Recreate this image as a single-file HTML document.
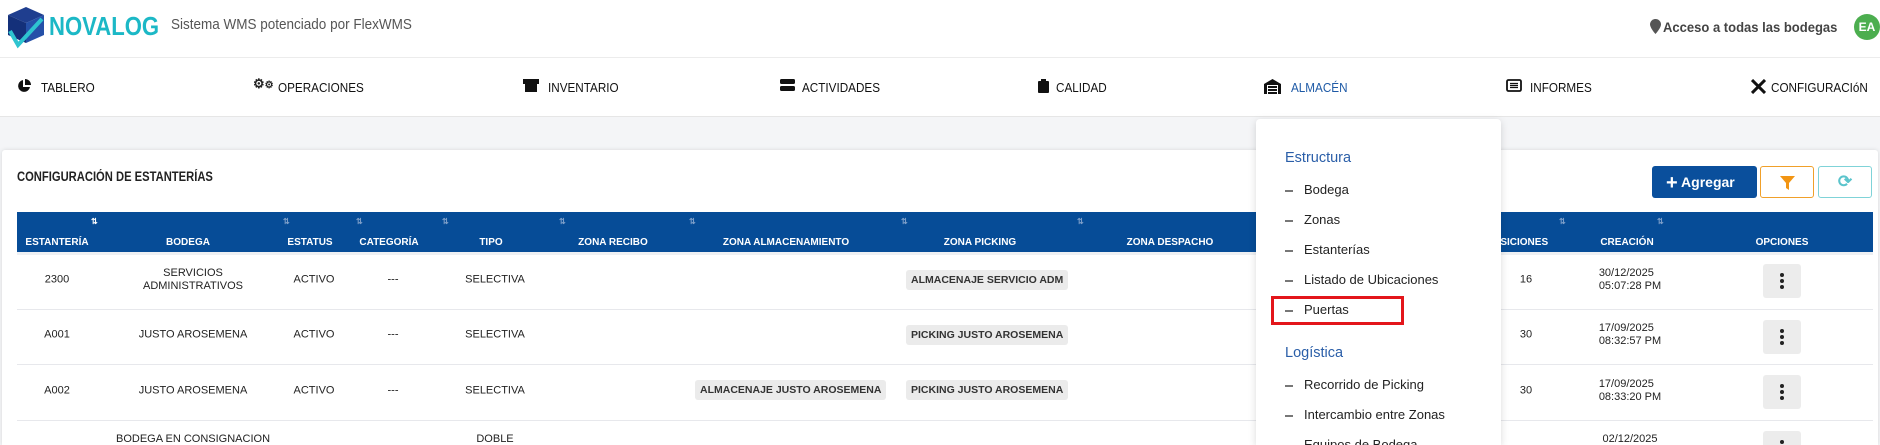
<!DOCTYPE html>
<html style="height:445px;overflow:hidden"><head><meta charset="utf-8"><style>
*{box-sizing:border-box;margin:0;padding:0}
html,body{width:1880px;height:445px;overflow:hidden}
body{background:#f4f5f7;font-family:"Liberation Sans",sans-serif;color:#222}
#w{position:relative;width:1880px;height:445px;overflow:hidden}
.abs{position:absolute}
.hdr{left:0;top:0;width:1880px;height:58px;background:#fff;border-bottom:1px solid #ececec}
.nav{left:0;top:58px;width:1880px;height:59px;background:#fff;border-bottom:1px solid #e6e6e6}
.ni{position:absolute;top:22px;font-size:13px;color:#111;white-space:nowrap;transform:scaleX(.9);transform-origin:left}
.ic{position:absolute;top:21px}
.card{left:2px;top:150px;width:1876px;height:295px;background:#fff;box-shadow:0 0 4px rgba(0,0,0,.12);border-radius:3px 3px 0 0}
.th{left:17px;top:212px;width:1856px;height:40px;background:#064c97}
.hc{position:absolute;top:25px;color:#fff;font-size:10px;font-weight:bold;transform:translateX(-50%);white-space:nowrap}
.so{position:absolute;top:5px;color:#7e9fc9;font-size:8px;font-weight:bold}
.cell{position:absolute;font-size:11px;color:#222;transform:translate(-50%,-50%);text-align:center;line-height:13px;white-space:nowrap}
.line{position:absolute;left:17px;width:1856px;height:1px;background:#e7e8ec}
.chip{position:absolute;height:20px;background:#ebebeb;border-radius:3px;font-size:10.5px;font-weight:bold;color:#333;padding:4px 5px;white-space:nowrap}
.opt{position:absolute;left:1763px;width:38px;height:34px;background:#ececec;border-radius:3px}
.opt i{position:absolute;left:17px;width:4px;height:4px;border-radius:2px;background:#222}
.dd{left:1256px;top:119px;width:245px;height:326px;background:#fff;border-radius:4px 4px 0 0;box-shadow:0 2px 8px rgba(0,0,0,.15);overflow:hidden}
.dh{position:absolute;left:29px;color:#2a5ea8;font-size:14.5px}
.di{position:absolute;left:48px;color:#222;font-size:13px;white-space:nowrap}
.dash{position:absolute;left:29px;width:8px;height:1.5px;background:#777}
</style></head><body><div id="w">
<div class="abs hdr">
 <svg class="abs" style="left:6px;top:5px" width="40" height="44" viewBox="0 0 40 44">
  <polygon points="2,10 20,2 38,10 20,18" fill="#1f3e8f"/>
  <polygon points="2,10 20,18 20,38 2,30" fill="#14307a"/>
  <polygon points="20,18 38,10 38,30 20,38" fill="#2550a8"/>
  <path d="M4,26 L12,40 L36,14" stroke="#2ec4d0" stroke-width="4" fill="none"/>
 </svg>
 <div class="abs" style="left:49px;top:11px;font-size:26px;font-weight:bold;color:#1cb8c6;transform:scaleX(.85);transform-origin:left">NOVALOG</div>
 <div class="abs" style="left:171px;top:16px;font-size:15px;color:#555;transform:scaleX(.9);transform-origin:left;white-space:nowrap">Sistema WMS potenciado por FlexWMS</div>
 <svg class="abs" style="left:1650px;top:19px" width="11" height="15" viewBox="0 0 11 15"><path d="M5.5 0C2.5 0 0 2.4 0 5.4 0 9 5.5 15 5.5 15S11 9 11 5.4C11 2.4 8.5 0 5.5 0z" fill="#555"/></svg>
 <div class="abs" style="left:1663px;top:19px;font-size:14px;font-weight:bold;color:#444;transform:scaleX(.93);transform-origin:left">Acceso a todas las bodegas</div>
 <div class="abs" style="left:1854px;top:14px;width:26px;height:26px;border-radius:13px;background:#4cae4f;color:#fff;font-size:12px;font-weight:bold;line-height:26px;text-align:center">EA</div>
</div>
<div class="abs nav">
 <svg class="ic" style="left:17px" width="14" height="14" viewBox="0 0 14 14"><path d="M6 1A6 6 0 1 0 13 8H6z" fill="#111"/><path d="M8 0v6h6A6 6 0 0 0 8 0z" fill="#111"/></svg>
 <div class="ni" style="left:41px">TABLERO</div>
 <div class="ic" style="left:253px;top:18px;font-size:13px;font-weight:bold">⚙<span style="font-size:10px">⚙</span></div>
 <div class="ni" style="left:278px">OPERACIONES</div>
 <svg class="ic" style="left:523px" width="16" height="13" viewBox="0 0 16 13"><rect x="0" y="0" width="16" height="5" fill="#111"/><rect x="2" y="5" width="12" height="8" fill="#111"/></svg>
 <div class="ni" style="left:548px">INVENTARIO</div>
 <svg class="ic" style="left:780px" width="15" height="13" viewBox="0 0 15 13"><rect x="0" y="0" width="15" height="5" rx="1.5" fill="#111"/><rect x="0" y="7" width="15" height="5" rx="1.5" fill="#111"/></svg>
 <div class="ni" style="left:802px">ACTIVIDADES</div>
 <svg class="ic" style="left:1038px" width="11" height="14" viewBox="0 0 11 14"><rect x="0" y="2" width="11" height="12" rx="1" fill="#111"/><rect x="3" y="0" width="5" height="3" fill="#111"/></svg>
 <div class="ni" style="left:1056px">CALIDAD</div>
 <svg class="ic" style="left:1264px" width="17" height="15" viewBox="0 0 17 15"><path d="M0 5L8.5 0 17 5V15H0z" fill="#111"/><rect x="3" y="6" width="11" height="9" fill="#fff"/><rect x="4" y="7" width="9" height="2" fill="#111"/><rect x="4" y="10" width="9" height="2" fill="#111"/><rect x="4" y="13" width="9" height="2" fill="#111"/></svg>
 <div class="ni" style="left:1291px;color:#1e5aa6">ALMACÉN</div>
 <svg class="ic" style="left:1506px" width="16" height="13" viewBox="0 0 16 13"><rect x="1" y="1" width="14" height="11" rx="1.5" fill="none" stroke="#111" stroke-width="1.8"/><path d="M4 4.5h8M4 6.5h8M4 8.5h8" stroke="#111" stroke-width="1.2"/></svg>
 <div class="ni" style="left:1530px">INFORMES</div>
 <svg class="ic" style="left:1751px" width="15" height="15" viewBox="0 0 15 15"><path d="M1 1L14 14M14 1L1 14" stroke="#111" stroke-width="3"/></svg>
 <div class="ni" style="left:1771px">CONFIGURACIóN</div>
</div>
<div class="abs card"></div>
<div class="abs" style="left:17px;top:169px;font-size:13.5px;font-weight:bold;color:#222;transform:scaleX(.83);transform-origin:left;white-space:nowrap">CONFIGURACIÓN DE ESTANTERÍAS</div>
<div class="abs" style="left:1652px;top:166px;width:105px;height:32px;background:#0a4f9c;border-radius:3px;color:#fff;font-weight:bold;font-size:14px;line-height:32px;padding-left:14px"><span style="font-size:20px;vertical-align:-2px">+</span> Agregar</div>
<div class="abs" style="left:1760px;top:166px;width:54px;height:32px;border:1px solid #f0a02a;border-radius:3px"><svg style="position:absolute;left:19px;top:9px" width="15" height="14" viewBox="0 0 15 14"><path d="M0 0H15L9 7V14L6 12V7z" fill="#f29513"/></svg></div>
<div class="abs" style="left:1818px;top:166px;width:54px;height:32px;border:1px solid #7fd3d8;border-radius:3px;color:#5bc4cc;font-size:17px;text-align:center;line-height:30px;font-weight:bold">⟳</div>
<div class="abs th">
 <div class="so" style="left:74px;color:#fff">⇅</div><div class="so" style="left:266px">⇅</div><div class="so" style="left:339px">⇅</div><div class="so" style="left:425px">⇅</div><div class="so" style="left:542px">⇅</div><div class="so" style="left:672px">⇅</div><div class="so" style="left:884px">⇅</div><div class="so" style="left:1060px">⇅</div><div class="so" style="left:1542px">⇅</div><div class="so" style="left:1640px">⇅</div>
 <div class="hc" style="left:40px">ESTANTERÍA</div>
 <div class="hc" style="left:171px">BODEGA</div>
 <div class="hc" style="left:293px">ESTATUS</div>
 <div class="hc" style="left:372px">CATEGORÍA</div>
 <div class="hc" style="left:474px">TIPO</div>
 <div class="hc" style="left:596px">ZONA RECIBO</div>
 <div class="hc" style="left:769px">ZONA ALMACENAMIENTO</div>
 <div class="hc" style="left:963px">ZONA PICKING</div>
 <div class="hc" style="left:1153px">ZONA DESPACHO</div>
 <div class="hc" style="left:1500px">POSICIONES</div>
 <div class="hc" style="left:1610px">CREACIÓN</div>
 <div class="hc" style="left:1765px">OPCIONES</div>
</div>
<div class="abs" style="left:17px;top:252px;width:1856px;height:3px;background:#eef0f3"></div>
<div class="line" style="top:309px"></div><div class="line" style="top:364px"></div><div class="line" style="top:420px"></div>

<div class="cell" style="left:57px;top:280px">2300</div>
<div class="cell" style="left:193px;top:280px">SERVICIOS<br>ADMINISTRATIVOS</div>
<div class="cell" style="left:314px;top:280px">ACTIVO</div>
<div class="cell" style="left:393px;top:280px">---</div>
<div class="cell" style="left:495px;top:280px">SELECTIVA</div>
<div class="chip" style="left:906px;top:270px">ALMACENAJE SERVICIO ADM</div>
<div class="cell" style="left:1526px;top:280px">16</div>
<div class="cell" style="left:1630px;top:280px;text-align:left">30/12/2025<br>05:07:28 PM</div>
<div class="opt" style="top:264px"><i style="top:9px"></i><i style="top:15px"></i><i style="top:21px"></i></div>

<div class="cell" style="left:57px;top:335px">A001</div>
<div class="cell" style="left:193px;top:335px">JUSTO AROSEMENA</div>
<div class="cell" style="left:314px;top:335px">ACTIVO</div>
<div class="cell" style="left:393px;top:335px">---</div>
<div class="cell" style="left:495px;top:335px">SELECTIVA</div>
<div class="chip" style="left:906px;top:325px">PICKING JUSTO AROSEMENA</div>
<div class="cell" style="left:1526px;top:335px">30</div>
<div class="cell" style="left:1630px;top:335px;text-align:left">17/09/2025<br>08:32:57 PM</div>
<div class="opt" style="top:320px"><i style="top:9px"></i><i style="top:15px"></i><i style="top:21px"></i></div>

<div class="cell" style="left:57px;top:391px">A002</div>
<div class="cell" style="left:193px;top:391px">JUSTO AROSEMENA</div>
<div class="cell" style="left:314px;top:391px">ACTIVO</div>
<div class="cell" style="left:393px;top:391px">---</div>
<div class="cell" style="left:495px;top:391px">SELECTIVA</div>
<div class="chip" style="left:695px;top:380px">ALMACENAJE JUSTO AROSEMENA</div>
<div class="chip" style="left:906px;top:380px">PICKING JUSTO AROSEMENA</div>
<div class="cell" style="left:1526px;top:391px">30</div>
<div class="cell" style="left:1630px;top:391px;text-align:left">17/09/2025<br>08:33:20 PM</div>
<div class="opt" style="top:375px"><i style="top:9px"></i><i style="top:15px"></i><i style="top:21px"></i></div>

<div class="abs" style="left:0;top:421px;width:1880px;height:24px;overflow:hidden">
 <div class="cell" style="left:57px;top:29px">A5DA</div>
 <div class="cell" style="left:193px;top:25px">BODEGA EN CONSIGNACION<br>X</div>
 <div class="cell" style="left:314px;top:29px">ACTIVO</div>
 <div class="cell" style="left:393px;top:29px">TEST</div>
 <div class="cell" style="left:495px;top:25px">DOBLE<br>X</div>
 <div class="cell" style="left:1526px;top:29px">6</div>
 <div class="cell" style="left:1630px;top:25px;text-align:left">02/12/2025<br>X</div>
 <div class="opt" style="top:10px"><i style="top:9px"></i></div>
</div>

<div class="abs dd">
 <div class="dh" style="top:31px">Estructura</div>
 <div class="dash" style="top:71px"></div><div class="di" style="top:63px">Bodega</div>
 <div class="dash" style="top:101px"></div><div class="di" style="top:93px">Zonas</div>
 <div class="dash" style="top:131px"></div><div class="di" style="top:123px">Estanterías</div>
 <div class="dash" style="top:161px"></div><div class="di" style="top:153px">Listado de Ubicaciones</div>
 <div class="dash" style="top:191px"></div><div class="di" style="top:183px">Puertas</div>
 <div style="position:absolute;left:15px;top:177px;width:133px;height:29px;border:3px solid #e3161b"></div>
 <div class="dh" style="top:226px">Logística</div>
 <div class="dash" style="top:266px"></div><div class="di" style="top:258px">Recorrido de Picking</div>
 <div class="dash" style="top:296px"></div><div class="di" style="top:288px">Intercambio entre Zonas</div>
 <div class="dash" style="top:326px"></div><div class="di" style="top:318px">Equipos de Bodega</div>
</div>
</div></body></html>
